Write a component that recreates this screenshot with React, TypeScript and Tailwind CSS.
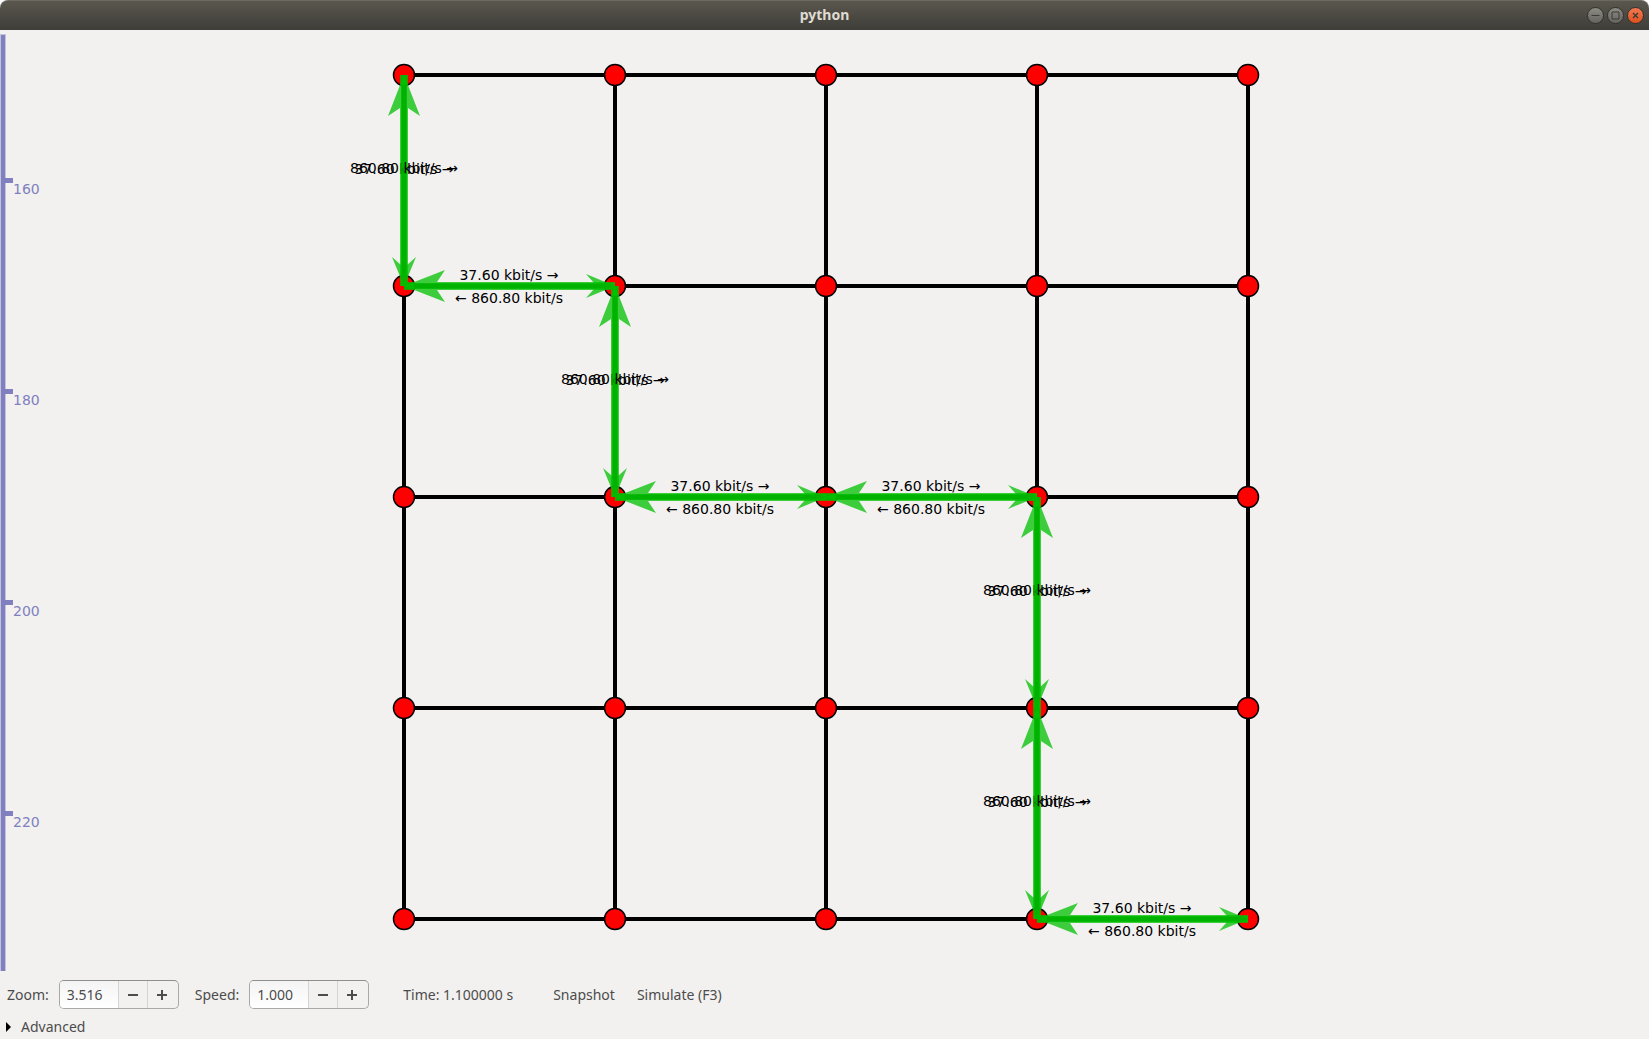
const COLS = [404, 615, 826, 1037, 1248];
const ROWS = [75, 286, 497, 708, 919];

type Flow = { x: number; y: number; dir: "h" | "v" };

const FLOWS: Flow[] = [
  { x: 404, y: 75, dir: "v" },
  { x: 404, y: 286, dir: "h" },
  { x: 615, y: 286, dir: "v" },
  { x: 615, y: 497, dir: "h" },
  { x: 826, y: 497, dir: "h" },
  { x: 1037, y: 497, dir: "v" },
  { x: 1037, y: 708, dir: "v" },
  { x: 1037, y: 919, dir: "h" },
];

const TICKS = [
  { y: 181, label: "160" },
  { y: 392, label: "180" },
  { y: 603, label: "200" },
  { y: 814, label: "220" },
];

const DOWN = "37.60 kbit/s →";
const UP = "860.80 kbit/s";

/* Both arrows of a link, drawn along +x from the origin: a narrow one forward and a wide one back. */
function ForwardArrow() {
  return (
    <g fill="#00c000" fillOpacity="0.75">
      <path d="M0 -3H211V3H0Z" fill="#00a000" fillOpacity="0.85" />
      <path d="M211 0L182 -12L190 -3H211V3H190L182 12Z" />
    </g>
  );
}

function BackArrow() {
  return (
    <g fill="#00c000" fillOpacity="0.75">
      <path d="M0 -4H211V4H0Z" />
      <path d="M0 0L41 -16L33 -4H10V4H33L41 16Z" />
    </g>
  );
}

function FlowMark({ x, y, dir }: Flow) {
  const place = `translate(${x} ${y})${dir === "v" ? " rotate(90)" : ""}`;
  if (dir === "h") {
    return (
      <>
        <g transform={place}>
          <ForwardArrow />
          <BackArrow />
        </g>
        <text x={x + 105} y={y - 6} textAnchor="middle">{DOWN}</text>
        <text x={x + 105} y={y + 17} textAnchor="middle">{`← ${UP}`}</text>
      </>
    );
  }
  return (
    <>
      <g transform={place}>
        <ForwardArrow />
      </g>
      <text x={x} y={y + 99} textAnchor="middle">{DOWN}</text>
      <g transform={place}>
        <BackArrow />
      </g>
      <text x={x} y={y + 98} textAnchor="middle">{`${UP} →`}</text>
    </>
  );
}

function Network() {
  return (
    <svg
      viewBox="45 30 1604 942"
      className="h-full min-w-0 flex-1"
      role="img"
      aria-label="Network topology"
      fontFamily="'DejaVu Sans', sans-serif"
      fontSize="14"
    >
      <g stroke="#000" strokeWidth="4">
        {ROWS.map((y) => (
          <path key={y} d={`M404 ${y}H1248`} />
        ))}
        {COLS.map((x) => (
          <path key={x} d={`M${x} 75V919`} />
        ))}
      </g>
      <g fill="#f00" stroke="#000" strokeWidth="1.5">
        {ROWS.map((y) => COLS.map((x) => <circle key={`${x}-${y}`} cx={x} cy={y} r="10.5" />))}
      </g>
      {FLOWS.map((f) => (
        <FlowMark key={`${f.x}-${f.y}-${f.dir}`} {...f} />
      ))}
    </svg>
  );
}

function Ruler() {
  return (
    <svg
      viewBox="0 30 45 942"
      className="h-full w-[45px] shrink-0"
      role="img"
      aria-label="Vertical ruler"
      fontFamily="'DejaVu Sans', sans-serif"
      fontSize="14"
      fill="#8080c0"
    >
      <rect x="0" y="34" width="6" height="937" fillOpacity="0.4" />
      <rect x="1" y="35" width="4" height="936" />
      {TICKS.map((t) => (
        <g key={t.label}>
          <rect x="5" y={t.y - 3} width="8" height="5" />
          <text x="13" y={t.y + 13}>{t.label}</text>
        </g>
      ))}
    </svg>
  );
}

function TitleBar() {
  const ring = "flex size-[17px] items-center justify-center rounded-full border border-[#33322d]";
  const gray = "bg-linear-to-b from-[#8c8b84] to-[#65645e]";
  return (
    <header className="grid h-[30px] shrink-0 grid-cols-[1fr_auto_1fr] items-center rounded-t-lg border-t border-[#6b6960] bg-linear-to-b from-[#5a574e] to-[#3e3d38] px-[5px] pb-px">
      <h1 className="col-start-2 text-sm leading-5 font-bold text-[#dfdbd2]">python</h1>
      <div className="flex justify-end gap-[3px]">
        <button aria-label="Minimize" className={`${ring} ${gray}`}>
          <svg viewBox="0 0 15 15" className="size-[15px] shrink-0" stroke="#3c3b37" fill="none">
            <path d="M3.5 7.5H11.5" />
          </svg>
        </button>
        <button aria-label="Maximize" className={`${ring} ${gray}`}>
          <svg viewBox="0 0 15 15" className="size-[15px] shrink-0" stroke="#3c3b37" fill="none">
            <path d="M4 4H11V11H4Z" />
          </svg>
        </button>
        <button aria-label="Close" className={`${ring} bg-linear-to-b from-[#f4784f] to-[#e0501c]`}>
          <svg viewBox="0 0 15 15" className="size-[15px] shrink-0" stroke="#3c3b37" strokeWidth="1.4" fill="none">
            <path d="M5 5L10 10M10 5L5 10" />
          </svg>
        </button>
      </div>
    </header>
  );
}

function SpinBox({ id, label, value }: { id: string; label: string; value: string }) {
  return (
    <div className="flex items-center gap-[10px]">
      <label htmlFor={id}>{label}</label>
      <div className="flex h-[29px] w-[120px] overflow-hidden rounded-[5px] border border-[#a9a8a4] border-t-[#8f8e8b] bg-[#f2f1f0]">
        <input
          id={id}
          defaultValue={value}
          className="w-[58px] min-w-0 bg-linear-to-b from-[#f4f4f4] to-white pl-[7px] outline-none"
        />
        <button aria-label={`Decrease ${id}`} className="flex w-[29px] items-center justify-center border-l border-[#d5d4d2]">
          <svg viewBox="0 0 12 12" className="size-3" stroke="#4c4c4c" strokeWidth="2">
            <path d="M1 6H11" />
          </svg>
        </button>
        <button aria-label={`Increase ${id}`} className="flex flex-1 items-center border-l border-[#d5d4d2] pl-2">
          <svg viewBox="0 0 12 12" className="size-3" stroke="#4c4c4c" strokeWidth="2">
            <path d="M1 6H11M6 1V11" />
          </svg>
        </button>
      </div>
    </div>
  );
}

export default function App() {
  return (
    <div className="flex h-screen flex-col bg-white font-['Noto_Sans',sans-serif] text-sm text-[#4c4c4c]">
      <TitleBar />
      <main className="flex min-h-0 flex-1 flex-col bg-[#f2f1f0]">
        <div className="flex min-h-0 flex-1">
          <Ruler />
          <Network />
        </div>
        <div className="flex h-[45px] shrink-0 items-center px-[7px]">
          <div className="flex gap-4">
            <SpinBox id="zoom" label="Zoom:" value="3.516" />
            <SpinBox id="speed" label="Speed:" value="1.000" />
          </div>
          <span className="ml-[34px]">Time: 1.100000 s</span>
          <button className="ml-10">Snapshot</button>
          <button className="ml-[22px]">Simulate (F3)</button>
        </div>
        <button className="flex h-[22px] shrink-0 items-center gap-[10px] self-start px-[6px] pb-[2px] leading-4">
          <svg viewBox="0 0 5 10" className="h-[10px] w-[5px]">
            <path d="M0 0L5 5L0 10Z" />
          </svg>
          Advanced
        </button>
      </main>
    </div>
  );
}
